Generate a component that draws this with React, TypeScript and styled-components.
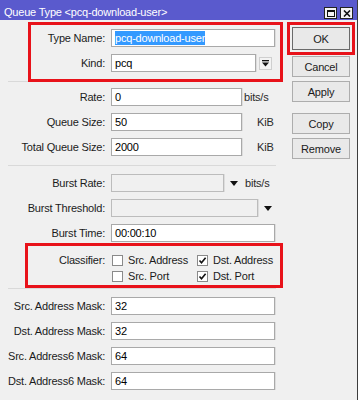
import React from 'react';
import styled, { createGlobalStyle } from 'styled-components';

const GlobalStyle = createGlobalStyle`
  html, body {
    margin: 0;
    padding: 0;
    background: #ffffff;
  }
  body {
    font-family: "Liberation Sans", Arial, sans-serif;
    font-size: 11px;
    letter-spacing: -0.2px;
    color: #1b1b1b;
  }
`;

const Window = styled.div`
  width: 357px;
  height: 400px;
  background: #f0f0f0;
  border-right: 1px solid #3d3d3d;
  overflow: hidden;
  display: flex;
  flex-direction: column;
`;

const TitleBar = styled.div`
  height: 20px;
  flex-shrink: 0;
  background: #5a5acd;
  color: #ffffff;
  display: flex;
  align-items: flex-end;
  padding: 0 4px;
`;

const Title = styled.div`
  flex: 1;
  line-height: 13px;
  margin-bottom: 1px;
  white-space: nowrap;
`;

const WinButtons = styled.div`
  display: flex;
  gap: 3px;
  margin-bottom: 1px;
`;

const WinButton = styled.div`
  width: 13px;
  height: 12px;
  box-sizing: border-box;
  background: #f4f4f4;
  border: 1px solid #222;
  display: flex;
  align-items: center;
  justify-content: center;
`;

const Body = styled.div`
  display: flex;
  flex: 1;
`;

const LeftCol = styled.div`
  width: 277px;
  padding: 9px 0 0 8px;
  display: flex;
  flex-direction: column;
`;

const Section = styled.div<{ $top?: number }>`
  display: flex;
  flex-direction: column;
  gap: 7px;
  margin-top: ${p => p.$top ?? 0}px;
`;

// red annotation frame drawn over a group of rows
const Highlight = styled(Section)<{ $inset: [number, number, number, number] }>`
  position: relative;
  &::after {
    content: '';
    position: absolute;
    top: ${p => p.$inset[0]}px;
    right: ${p => p.$inset[1]}px;
    bottom: ${p => p.$inset[2]}px;
    left: ${p => p.$inset[3]}px;
    border: 3px solid #e8121a;
    pointer-events: none;
  }
`;

const Separator = styled.div<{ $top: number; $bottom: number }>`
  height: 1px;
  width: 268px;
  background: #d9d9d9;
  margin: ${p => p.$top}px 0 ${p => p.$bottom}px;
`;

const Row = styled.div`
  display: grid;
  grid-template-columns: 97px auto;
  column-gap: 6px;
  align-items: center;
  min-height: 18px;
`;

const Label = styled.div<{ $alignTop?: boolean }>`
  text-align: right;
  white-space: nowrap;
  align-self: ${p => (p.$alignTop ? 'start' : 'center')};
  line-height: ${p => (p.$alignTop ? '12px' : 'normal')};
`;

const Controls = styled.div`
  display: flex;
  align-items: center;
`;

const Field = styled.div<{ $w: number; $disabled?: boolean }>`
  width: ${p => p.$w}px;
  height: 18px;
  box-sizing: border-box;
  background: ${p => (p.$disabled ? '#f0f0f0' : '#ffffff')};
  border: 1px solid ${p => (p.$disabled ? '#bcbcbc' : '#a9a9a9')};
  box-shadow: 1px 0 0 #dddddd;
  padding-left: 3px;
  display: flex;
  align-items: center;
  line-height: 14px;
  color: #000;
  white-space: nowrap;
`;

const Selected = styled.span`
  background: #3399ff;
  color: #ffffff;
`;

const Unit = styled.span<{ $gap: number }>`
  margin-left: ${p => p.$gap}px;
  color: #2a2a2a;
`;

const DropButton = styled.div`
  width: 13px;
  height: 13px;
  margin-left: 3px;
  box-sizing: border-box;
  border: 1px solid #cfcfcf;
  background: #f3f3f3;
  display: flex;
  align-items: center;
  justify-content: center;
`;

const ArrowBox = styled.span<{ $gap: number }>`
  display: inline-flex;
  margin-left: ${p => p.$gap}px;
`;

const CheckGrid = styled.div`
  display: grid;
  grid-template-columns: 85px auto;
  row-gap: 4px;
  padding-left: 1px;
`;

const CheckItem = styled.div`
  display: flex;
  align-items: center;
  gap: 5px;
  height: 12px;
  white-space: nowrap;
`;

const CheckBox = styled.span`
  width: 11px;
  height: 11px;
  box-sizing: border-box;
  border: 1px solid #8a8a8a;
  background: #ffffff;
  display: inline-flex;
  align-items: center;
  justify-content: center;
`;

const ButtonCol = styled.div`
  width: 58px;
  margin-left: 7px;
  padding-top: 7px;
  display: flex;
  flex-direction: column;
`;

const Button = styled.div<{ $primary?: boolean; $h?: number; $after?: number }>`
  height: ${p => p.$h ?? 21}px;
  margin-bottom: ${p => p.$after ?? 4}px;
  box-sizing: border-box;
  border: 1px solid ${p => (p.$primary ? '#6a6a6a' : '#adadad')};
  background: #e9e9e9;
  display: flex;
  align-items: center;
  justify-content: center;
  color: #1b1b1b;
  outline: ${p => (p.$primary ? '3px solid #e8121a' : 'none')};
  outline-offset: 2px;
`;

const DownArrow = () => (
  <svg width="8" height="5" viewBox="0 0 8 5">
    <polygon points="0,0 8,0 4,5" fill="#111" />
  </svg>
);

const Check = () => (
  <svg width="9" height="9" viewBox="0 0 9 9">
    <polyline points="1.5,4.5 3.5,6.8 7.6,1.8" fill="none" stroke="#111" strokeWidth="1.6" />
  </svg>
);

const App: React.FC = () => {
  return (
    <>
      <GlobalStyle />
      <Window>
        <TitleBar>
          <Title>Queue Type &lt;pcq-download-user&gt;</Title>
          <WinButtons>
            <WinButton>
              <svg width="8" height="7" viewBox="0 0 8 7">
                <rect x="0.5" y="0.5" width="7" height="6" fill="none" stroke="#111" />
                <line x1="0" y1="1.5" x2="8" y2="1.5" stroke="#111" />
              </svg>
            </WinButton>
            <WinButton>
              <svg width="8" height="7" viewBox="0 0 8 7">
                <path d="M1 0.5 L7 6.5 M7 0.5 L1 6.5" stroke="#111" strokeWidth="1.6" />
              </svg>
            </WinButton>
          </WinButtons>
        </TitleBar>

        <Body>
          <LeftCol>
            <Highlight $inset={[-7, 2, -10, 20]}>
              <Row>
                <Label>Type Name:</Label>
                <Field $w={164}>
                  <Selected>pcq-download-user</Selected>
                </Field>
              </Row>
              <Row>
                <Label>Kind:</Label>
                <Controls>
                  <Field $w={145}>pcq</Field>
                  <DropButton>
                    <svg width="7" height="7" viewBox="0 0 7 7">
                      <rect x="0" y="0" width="7" height="1.3" fill="#111" />
                      <polygon points="0,2.5 7,2.5 3.5,6.5" fill="#111" />
                    </svg>
                  </DropButton>
                </Controls>
              </Row>
            </Highlight>

            <Separator $top={9} $bottom={6} />

            <Section>
              <Row>
                <Label>Rate:</Label>
                <Controls>
                  <Field $w={131}>0</Field>
                  <Unit $gap={2}>bits/s</Unit>
                </Controls>
              </Row>
              <Row>
                <Label>Queue Size:</Label>
                <Controls>
                  <Field $w={131}>50</Field>
                  <Unit $gap={15}>KiB</Unit>
                </Controls>
              </Row>
              <Row>
                <Label>Total Queue Size:</Label>
                <Controls>
                  <Field $w={131}>2000</Field>
                  <Unit $gap={15}>KiB</Unit>
                </Controls>
              </Row>
            </Section>

            <Separator $top={9} $bottom={8} />

            <Section>
              <Row>
                <Label>Burst Rate:</Label>
                <Controls>
                  <Field $w={113} $disabled />
                  <ArrowBox $gap={6}>
                    <DownArrow />
                  </ArrowBox>
                  <Unit $gap={7}>bits/s</Unit>
                </Controls>
              </Row>
              <Row>
                <Label>Burst Threshold:</Label>
                <Controls>
                  <Field $w={147} $disabled />
                  <ArrowBox $gap={6}>
                    <DownArrow />
                  </ArrowBox>
                </Controls>
              </Row>
              <Row>
                <Label>Burst Time:</Label>
                <Field $w={164}>00:00:10</Field>
              </Row>
            </Section>

            <Highlight $top={12} $inset={[-11, 2, -6, 17]}>
              <Row>
                <Label $alignTop>Classifier:</Label>
                <CheckGrid>
                  <CheckItem>
                    <CheckBox />
                    Src. Address
                  </CheckItem>
                  <CheckItem>
                    <CheckBox>
                      <Check />
                    </CheckBox>
                    Dst. Address
                  </CheckItem>
                  <CheckItem>
                    <CheckBox />
                    Src. Port
                  </CheckItem>
                  <CheckItem>
                    <CheckBox>
                      <Check />
                    </CheckBox>
                    Dst. Port
                  </CheckItem>
                </CheckGrid>
              </Row>
            </Highlight>

            <Separator $top={6} $bottom={8} />

            <Section>
              <Row>
                <Label>Src. Address Mask:</Label>
                <Field $w={164}>32</Field>
              </Row>
              <Row>
                <Label>Dst. Address Mask:</Label>
                <Field $w={164}>32</Field>
              </Row>
              <Row>
                <Label>Src. Address6 Mask:</Label>
                <Field $w={164}>64</Field>
              </Row>
              <Row>
                <Label>Dst. Address6 Mask:</Label>
                <Field $w={164}>64</Field>
              </Row>
            </Section>
          </LeftCol>

          <ButtonCol>
            <Button $primary $h={23} $after={6}>OK</Button>
            <Button>Cancel</Button>
            <Button $after={11}>Apply</Button>
            <Button>Copy</Button>
            <Button>Remove</Button>
          </ButtonCol>
        </Body>
      </Window>
    </>
  );
};

export default App;
